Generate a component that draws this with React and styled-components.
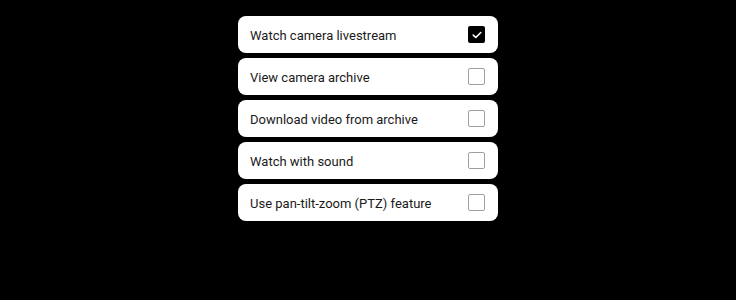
import React, { useState } from "react";
import styled, { createGlobalStyle } from "styled-components";

const GlobalStyle = createGlobalStyle`
    html, body {
        margin: 0;
        padding: 0;
        background: #000;
    }
    * {
        box-sizing: border-box;
    }
`;

const permissions = [
    "Watch camera livestream",
    "View camera archive",
    "Download video from archive",
    "Watch with sound",
    "Use pan-tilt-zoom (PTZ) feature",
];

export default function App() {
    const [checked, setChecked] = useState([true, false, false, false, false]);

    const toggle = (i) => {
        setChecked((prev) => prev.map((v, idx) => (idx === i ? !v : v)));
    };

    return (
        <Main>
            <GlobalStyle />
            <List>
                {permissions.map((label, i) => (
                    <Row key={label} onClick={() => toggle(i)}>
                        <Label>{label}</Label>
                        <Box $checked={checked[i]}>
                            {checked[i] && (
                                <svg width="10" height="8" viewBox="0 0 10 8" fill="none">
                                    <path
                                        d="M1.2 4.1L3.8 6.5L8.8 1.5"
                                        stroke="#fff"
                                        strokeWidth="1.6"
                                        strokeLinecap="round"
                                        strokeLinejoin="round"
                                    />
                                </svg>
                            )}
                        </Box>
                    </Row>
                ))}
            </List>
        </Main>
    );
}

const Main = styled.main`
    width: 100%;
    height: 300px;
    background: #000;
    display: flex;
    justify-content: center;
    padding-top: 16px;
    font-family: Roboto, "Liberation Sans", sans-serif;
`;

const List = styled.div`
    width: 260px;
    display: flex;
    flex-direction: column;
    gap: 5px;
`;

const Row = styled.div`
    height: 37px;
    background: #fff;
    border-radius: 8px;
    display: flex;
    align-items: center;
    justify-content: space-between;
    padding: 0 13px 0 12px;
    cursor: pointer;
`;

const Label = styled.span`
    font-size: 13px;
    color: #1a1a1a;
    padding-top: 2px;
`;

const Box = styled.span`
    width: 17px;
    height: 17px;
    border-radius: 2px;
    display: flex;
    align-items: center;
    justify-content: center;
    background: ${(p) => (p.$checked ? "#000" : "#fff")};
    border: ${(p) => (p.$checked ? "none" : "1.5px solid #a0a0a0")};
`;
